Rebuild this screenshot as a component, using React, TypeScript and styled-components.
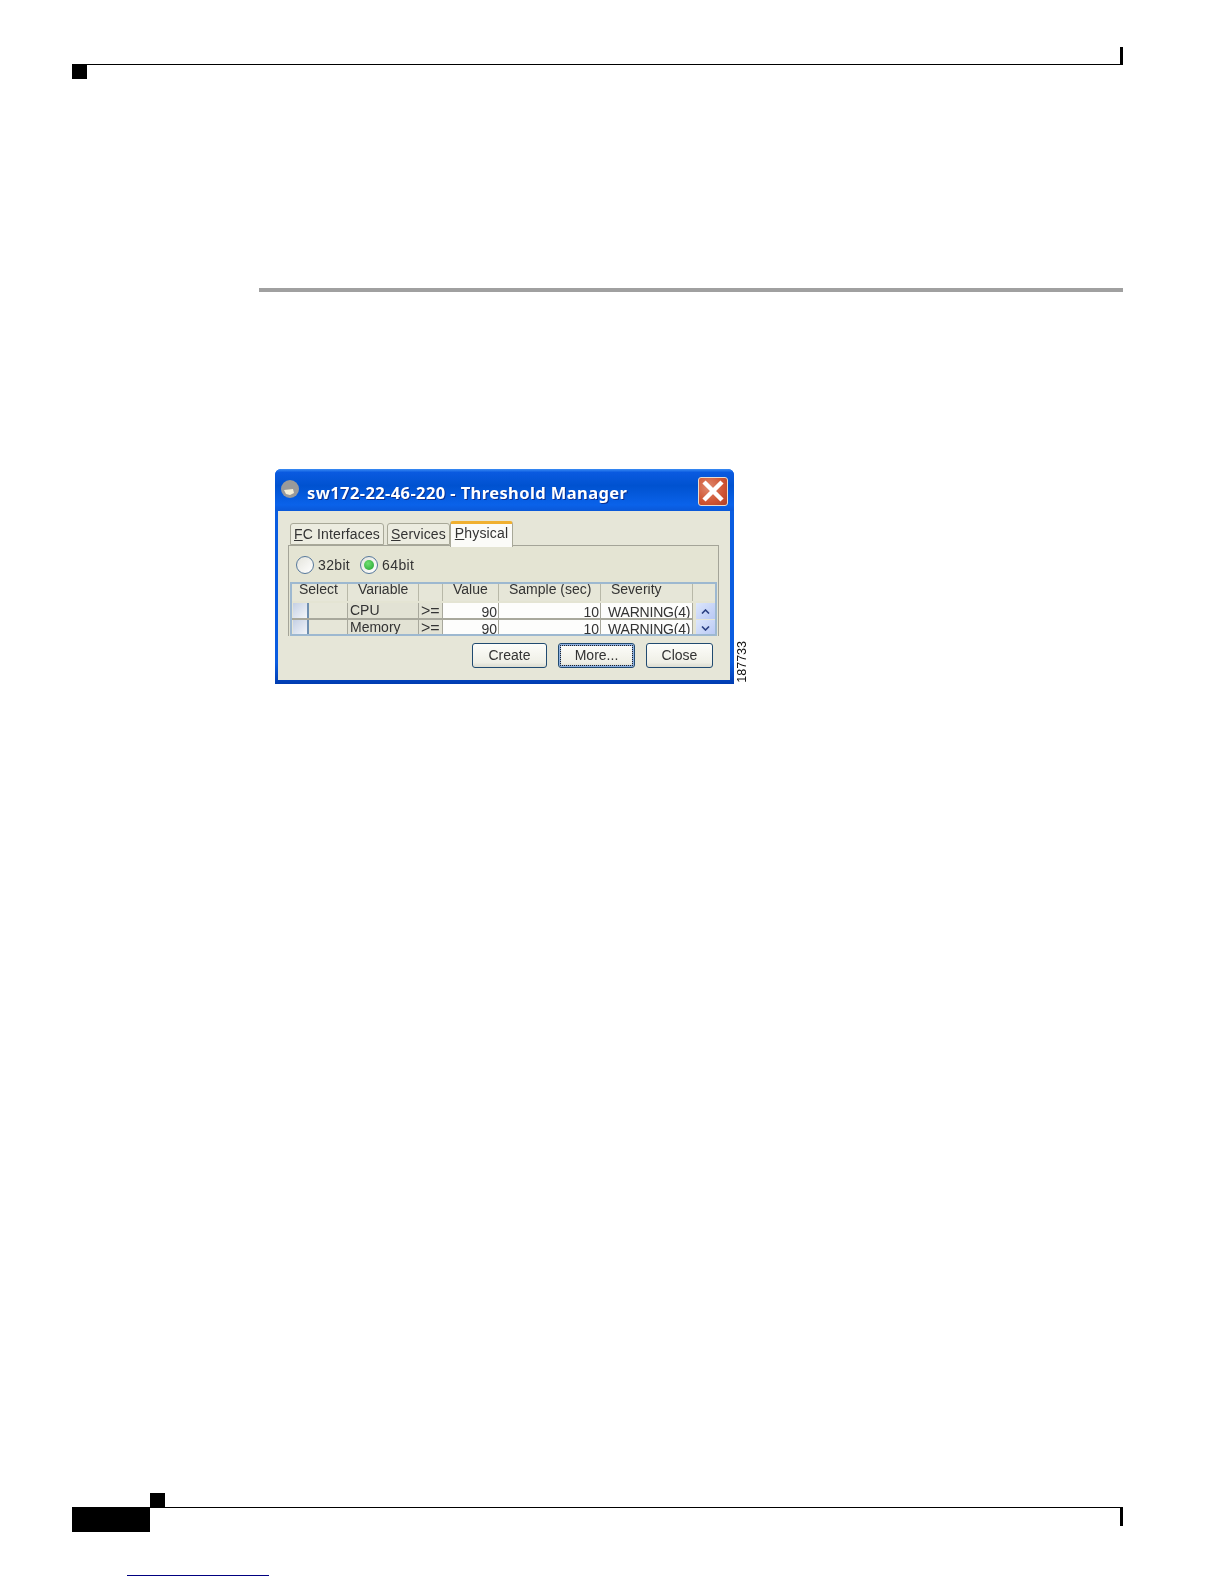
import styled, { createGlobalStyle } from 'styled-components'

const rows = [
  { name: 'CPU', value: '90', sample: '10', severity: 'WARNING(4)' },
  { name: 'Memory', value: '90', sample: '10', severity: 'WARNING(4)' },
]

const GlobalStyle = createGlobalStyle`
  html, body {
    margin: 0;
    padding: 0;
    background: #fff;
    font-family: "Liberation Sans", Arial, sans-serif;
  }
`

const Page = styled.div`
  width: 1224px;
  height: 1584px;
  box-sizing: border-box;
  padding: 47px 101px 0 72px;
  display: flex;
  flex-direction: column;
  overflow: hidden;
`

/* page header marks */
const Tick = styled.div`
  width: 3px;
  height: ${(p) => p.$height}px;
  background: #000;
`

const HeaderTop = styled.div`
  height: 17px;
  display: flex;
  justify-content: flex-end;
`

const HeaderRule = styled.div`
  height: 1px;
  background: #000;
`

const Square = styled.div`
  width: 15px;
  height: 14px;
  background: #000;
`

const SectionRule = styled.div`
  height: 4px;
  margin: 209px 0 0 187px;
  background: #a0a0a0;
`

/* figure */
const Figure = styled.div`
  display: flex;
  align-items: flex-end;
  margin: 177px 0 0 203px;
`

const FigureNumber = styled.div`
  writing-mode: vertical-rl;
  transform: rotate(180deg);
  font-size: 12.5px;
  line-height: 13px;
  color: #111;
  margin: 0 0 1px 2px;
`

const Window = styled.div`
  width: 459px;
  height: 215px;
  box-sizing: border-box;
  display: flex;
  flex-direction: column;
  padding: 0 4px 4px 3px;
  border-radius: 6px 6px 0 0;
  background: linear-gradient(180deg, #0a5ce0 0, #0a5ce0 90%, #003cb0 100%);
  filter: blur(0.45px);
`

const TitleBar = styled.div`
  height: 40px;
  flex: none;
  display: flex;
  align-items: center;
  margin: 0 -4px 0 -3px;
  padding: 0 6px 2px 5px;
  border-radius: 6px 6px 0 0;
  background: linear-gradient(180deg, #3a8cf4 0, #0a5ae0 8%, #0052d0 40%, #0a62ea 85%, #0a58d8 100%);
`

const TitleIcon = styled.svg`
  width: 20px;
  height: 20px;
  flex: none;
  margin-right: 7px;
`

const TitleText = styled.div`
  flex: 1;
  margin-top: 8px;
  font-family: "Noto Sans", sans-serif;
  font-weight: 700;
  font-size: 16.5px;
  line-height: 20px;
  letter-spacing: 0.4px;
  color: #fff;
  text-shadow: 1px 1px 0 #0a2f90;
  white-space: nowrap;
`

const CloseButton = styled.div`
  width: 30px;
  height: 29px;
  margin-top: 4px;
  box-sizing: border-box;
  display: flex;
  align-items: center;
  justify-content: center;
  border: 1px solid #e8dcd0;
  border-radius: 3px;
  background: radial-gradient(circle at 35% 35%, #e08a70, #cf5432 60%, #b04028);
`

const Body = styled.div`
  flex: 1;
  display: flex;
  flex-direction: column;
  background: #e6e6d8;
  padding: 10px 0 0 10px;
`

const TabRow = styled.div`
  display: flex;
  align-items: flex-start;
  padding-left: 2px;
  margin-bottom: -2px;
  position: relative;
  z-index: 1;
`

const Tab = styled.div`
  width: ${(p) => p.$width}px;
  height: ${(p) => (p.$active ? 26 : 22)}px;
  margin: ${(p) => (p.$active ? '0' : '2px 0 0 0')};
  margin-right: ${(p) => p.$gap || 0}px;
  box-sizing: border-box;
  text-align: center;
  font-size: 14px;
  line-height: ${(p) => (p.$active ? 18 : 21)}px;
  letter-spacing: 0.15px;
  color: #333;
  white-space: nowrap;
  background: ${(p) => (p.$active ? '#fbfbf8' : '#ecece0')};
  border: 1px solid #a8a898;
  border-bottom: ${(p) => (p.$active ? 'none' : '1px solid #a8a898')};
  border-top: ${(p) => (p.$active ? '3px solid #f0b030' : '1px solid #a8a898')};
  border-radius: 3px 3px 0 0;
`

const Mnemonic = styled.span`
  text-decoration: underline;
`

const Panel = styled.div`
  width: 431px;
  height: 91px;
  box-sizing: border-box;
  flex: none;
  background: #e4e4d3;
  border: 1px solid #a4a498;
  border-bottom: none;
  display: flex;
  flex-direction: column;
`

const RadioRow = styled.div`
  height: 36px;
  box-sizing: border-box;
  padding: 2px 0 0 7px;
  flex: none;
  display: flex;
  align-items: center;
  gap: 10px;
`

const RadioOption = styled.div`
  display: flex;
  align-items: center;
  gap: 4px;
  font-size: 14px;
  letter-spacing: 0.35px;
  color: #333;
`

const RadioCircle = styled.div`
  width: 18px;
  height: 18px;
  box-sizing: border-box;
  display: flex;
  align-items: center;
  justify-content: center;
  border: 1px solid #56789c;
  border-radius: 50%;
  background: linear-gradient(135deg, #e4e4dc, #fff);
`

const RadioDot = styled.div`
  width: 10px;
  height: 10px;
  border-radius: 50%;
  background: radial-gradient(circle at 40% 35%, #70e070, #20a030);
`

const Table = styled.div`
  flex: 1;
  min-height: 0;
  margin: 0 1px;
  border: 2px solid #9db8d0;
  overflow: hidden;
  display: grid;
  grid-template-columns: 56px 71px 24px 56px 102px 92px 23px;
  grid-template-rows: 19px 17px 17px;
  font-size: 14px;
  color: #333;
`

const HeadCell = styled.div`
  padding-left: ${(p) => p.$pad}px;
  line-height: 10px;
  white-space: nowrap;
  background: #e6e6d8;
  box-shadow: inset -1px 0 0 ${(p) => (p.$plain ? 'transparent' : '#b8b8a8')};
  margin-bottom: 2px;
`

const SelectCell = styled.div`
  display: flex;
  background: #e6e6d8;
  border-bottom: 2px solid #a8a89c;
  border-right: 1px solid #a8a89c;
`

const CheckBox = styled.div`
  width: 16px;
  box-sizing: border-box;
  margin-left: 1px;
  background: linear-gradient(135deg, #c4d0e4, #f4f6fa);
  border-right: 2px solid #6f8fb0;
`

const NameCell = styled.div`
  background: #e2e2d4;
  border-bottom: 2px solid #a8a89c;
  border-right: 1px solid #a8a89c;
  padding-left: 2px;
  font-size: ${(p) => (p.$large ? 16 : 14)}px;
  line-height: 15px;
  white-space: nowrap;
  overflow: hidden;
`

const ValueCell = styled.div`
  background: #fdfdfc;
  border-bottom: 2px solid #a8a89c;
  border-right: 1px solid #a8a89c;
  padding: 0 1px 0 7px;
  text-align: ${(p) => (p.$right ? 'right' : 'left')};
  letter-spacing: ${(p) => (p.$right ? 0 : -0.2)}px;
  line-height: 18px;
  white-space: nowrap;
  overflow: hidden;
`

const ScrollButton = styled.div`
  display: flex;
  align-items: center;
  justify-content: center;
  margin: 0 1px 1px 3px;
  background: linear-gradient(135deg, #dce6fb, #b8c8f4);
`

const ButtonRow = styled.div`
  display: flex;
  justify-content: flex-end;
  gap: 11px;
  margin: 7px 17px 0 0;
`

const Button = styled.div`
  width: ${(p) => p.$width}px;
  height: 25px;
  box-sizing: border-box;
  text-align: center;
  font-size: 14px;
  line-height: 23px;
  color: #333;
  border: 1px solid #204a70;
  border-radius: 3px;
  background: linear-gradient(180deg, #fdfdfa, #efefe6 80%, #dcdcd0);
  box-shadow: ${(p) => (p.$focused ? 'inset 0 0 0 2px #8fb0e0' : 'none')};
  outline: ${(p) => (p.$focused ? '1px dotted #222' : 'none')};
  outline-offset: -3px;
`

/* page footer marks */
const Footer = styled.div`
  margin-top: 809px;
`

const FooterSquare = styled(Square)`
  margin-left: 78px;
`

const FooterRow = styled.div`
  display: flex;
`

const FooterBlock = styled.div`
  width: 78px;
  height: 25px;
  flex: none;
  background: #000;
`

const FooterLine = styled.div`
  flex: 1;
  height: 18px;
  border-top: 1px solid #000;
  display: flex;
  justify-content: flex-end;
`

const LinkLine = styled.div`
  width: 142px;
  height: 1px;
  margin: 43px 0 0 55px;
  background: #000080;
`

function Chevron({ up }: { up?: boolean }) {
  return (
    <svg width="9" height="5" viewBox="0 0 9 5">
      <path
        d={up ? 'M1 4.5 L4.5 1 L8 4.5' : 'M1 0.5 L4.5 4 L8 0.5'}
        fill="none"
        stroke="#2a3f80"
        strokeWidth="1.6"
      />
    </svg>
  )
}

export default function App() {
  return (
    <>
      <GlobalStyle />
      <Page>
        <HeaderTop>
          <Tick $height={17} />
        </HeaderTop>
        <HeaderRule />
        <Square />

        <SectionRule />

        <Figure>
          <Window>
            <TitleBar>
              <TitleIcon viewBox="0 0 20 20">
                <circle cx="10" cy="10" r="9" fill="#9a9a9a" />
                <path d="M4 11 L13 10 L14 14 L10 16 L6 15 Z" fill="#f6f0d8" />
              </TitleIcon>
              <TitleText>sw172-22-46-220 - Threshold Manager</TitleText>
              <CloseButton>
                <svg width="24" height="24" viewBox="0 0 24 24">
                  <path d="M3 3 L21 21 M21 3 L3 21" stroke="#fff" strokeWidth="4.5" />
                </svg>
              </CloseButton>
            </TitleBar>

            <Body>
              <TabRow>
                <Tab $width={94} $gap={3}>
                  <Mnemonic>F</Mnemonic>C Interfaces
                </Tab>
                <Tab $width={63}>
                  <Mnemonic>S</Mnemonic>ervices
                </Tab>
                <Tab $width={63} $active>
                  <Mnemonic>P</Mnemonic>hysical
                </Tab>
              </TabRow>

              <Panel>
                <RadioRow>
                  <RadioOption>
                    <RadioCircle />
                    32bit
                  </RadioOption>
                  <RadioOption>
                    <RadioCircle>
                      <RadioDot />
                    </RadioCircle>
                    64bit
                  </RadioOption>
                </RadioRow>

                <Table>
                  <HeadCell $pad={7}>Select</HeadCell>
                  <HeadCell $pad={10}>Variable</HeadCell>
                  <HeadCell $pad={0} />
                  <HeadCell $pad={10}>Value</HeadCell>
                  <HeadCell $pad={10}>Sample (sec)</HeadCell>
                  <HeadCell $pad={10}>Severity</HeadCell>
                  <HeadCell $pad={0} $plain />

                  {rows.map((row, i) => (
                    <>
                      <SelectCell key={row.name}>
                        <CheckBox />
                      </SelectCell>
                      <NameCell>{row.name}</NameCell>
                      <NameCell $large>&gt;=</NameCell>
                      <ValueCell $right>{row.value}</ValueCell>
                      <ValueCell $right>{row.sample}</ValueCell>
                      <ValueCell>{row.severity}</ValueCell>
                      <ScrollButton>
                        <Chevron up={i === 0} />
                      </ScrollButton>
                    </>
                  ))}
                </Table>
              </Panel>

              <ButtonRow>
                <Button $width={75}>Create</Button>
                <Button $width={77} $focused>
                  More...
                </Button>
                <Button $width={67}>Close</Button>
              </ButtonRow>
            </Body>
          </Window>
          <FigureNumber>187733</FigureNumber>
        </Figure>

        <Footer>
          <FooterSquare />
          <FooterRow>
            <FooterBlock />
            <FooterLine>
              <Tick $height={18} />
            </FooterLine>
          </FooterRow>
        </Footer>

        <LinkLine />
      </Page>
    </>
  )
}
